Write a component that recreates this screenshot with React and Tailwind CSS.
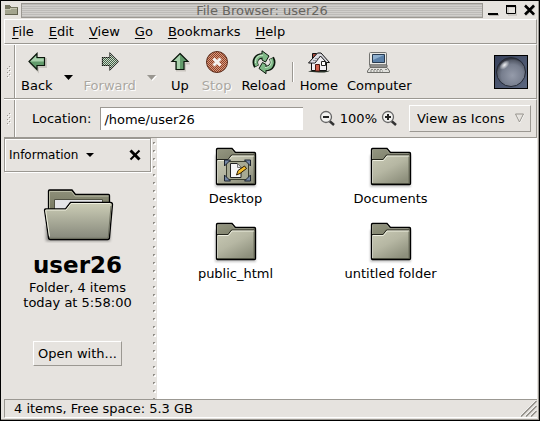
import React from 'react';

function SmallFolder() {
  return (
    <svg className="ml-px" width="13" height="12" viewBox="0 0 13 12" shapeRendering="crispEdges" aria-hidden="true">
      <path d="M0 11V1h5l1 2h7v8z" fill="#a3a48e" />
      <path d="M0 1h5v1h1v1h7v1H5v1H0z" fill="#74745f" />
      <path d="M0 5h5V4h7v1H6v1H0z" fill="#c5c5b0" />
      <path d="M12 4h1v7H0v-1h12z" fill="#62624f" />
    </svg>
  );
}

function Folder({ desktop }) {
  return (
    <svg width="48" height="42" viewBox="0 0 48 42" aria-hidden="true">
      <defs>
        <linearGradient id="front" x1="0" y1="0" x2="0.7" y2="1">
          <stop offset="0" stopColor="#c9cab5" />
          <stop offset="0.5" stopColor="#b6b7a3" />
          <stop offset="1" stopColor="#8d8f7c" />
        </linearGradient>
        <linearGradient id="tab" x1="0" y1="0" x2="0.5" y2="1">
          <stop offset="0" stopColor="#969882" />
          <stop offset="1" stopColor="#5f614f" />
        </linearGradient>
        <filter id="soft"><feGaussianBlur stdDeviation="1" /></filter>
      </defs>
      <rect x="3" y="8" width="41" height="32" fill="#000" opacity="0.22" filter="url(#soft)" />
      <path d="M4.500 37V2.500q0-1 1-1h14.500l3.500 4h19q1 0 1 1V36.500q0 1-1 1h-37q-1 0-1-1z" fill="url(#tab)" />
      <path d="M5.500 12V3q0-.5.5-.5h13.500l3.500 4h18.500" fill="none" stroke="#babba7" />
      <path d="M5 37V13.500h11l4-5h22.500V37z" fill="url(#front)" />
      <path d="M5 12.500h11l3.500-4.500h23" fill="none" stroke="#24251c" />
      <path d="M5.500 36V13.500h11l3.500-4.500h22" fill="none" stroke="#eeefe0" />
      <path d="M5 36.500h37v-27" fill="none" stroke="#6a6c5a" />
      <path d="M4.500 36V2.500q0-1 1-1h14.500l3.500 4h19q1 0 1 1V36.500q0 1-1 1h-37q-1 0-1-1z" fill="none" stroke="#000" strokeWidth="1.300" />
      {desktop && (
        <g>
          <path d="M14.500 14.500h22v18h-22z" fill="#a7a993" stroke="#3c3e30" />
          <path d="M12.500 13h6l-6 6zM38.500 13h-6l6 6zM12.500 34h6l-6-6zM38.500 34h-6l6-6z" fill="#7385a3" stroke="#1d2430" />
          <path d="M18.500 16.500h7l3.500 4v10H18.500z" fill="#f6f6f6" stroke="#222" />
          <path d="M25.500 16.500v4H29" fill="#ddd" stroke="#777" />
          <path d="M24.500 28l1.500-4.500 6.500-4.500 2 2.500-6.500 5z" fill="#f4bd2e" stroke="#2b1b00" />
        </g>
      )}
    </svg>
  );
}

function OpenFolder() {
  return (
    <svg width="76" height="62" viewBox="0 0 76 62" aria-hidden="true">
      <defs>
        <linearGradient id="openFront" x1="0" y1="0" x2="0" y2="1">
          <stop offset="0" stopColor="#cdceb7" />
          <stop offset="1" stopColor="#85877a" />
        </linearGradient>
        <linearGradient id="openBack" x1="0" y1="0" x2="0" y2="1">
          <stop offset="0" stopColor="#8e907a" />
          <stop offset="1" stopColor="#66684f" />
        </linearGradient>
        <filter id="openSoft"><feGaussianBlur stdDeviation="1.800" /></filter>
      </defs>
      <rect x="6" y="40" width="64" height="16" fill="#000" opacity="0.400" filter="url(#openSoft)" />
      <path d="M8.500 40V6q0-1 1-1h22.500l3.500 4.500h33q1 0 1 1V40z" fill="url(#openBack)" stroke="#000" strokeWidth="1.300" />
      <path d="M9.500 30V6.500h22l3.500 4.500h33.500" fill="none" stroke="#b9bba5" />
      <path d="M14.500 30V14.500h48v10" fill="#e4e5e8" stroke="#515244" />
      <path d="M4.500 25q0-1 1-1h20l5-6.500h40q2 0 2 2l-3 33q0 2-2 2H10.500q-2 0-2-2z" fill="url(#openFront)" stroke="#000" strokeWidth="1.300" />
      <path d="M9.500 51.500L5.700 25.500q0-.5.5-.5H26l5-6.500h39.500" fill="none" stroke="#eff0df" />
      <path d="M10 53.300h57q1 0 1.300-1.300l2.700-31" fill="none" stroke="#6a6c5c" />
    </svg>
  );
}

function Back() {
  return (
    <svg width="24" height="24" viewBox="0 0 24 24" aria-hidden="true">
      <path d="M5 13l8 8v-4h8V8" fill="none" stroke="#c9c5bf" strokeWidth="2" />
      <path d="M12 3.500v4h7.500v8H12v4L4 11.500z" fill="#629b6b" />
      <path d="M11.500 5v3.500H19v3H5z" fill="#a9d2ad" />
      <path d="M12 3.500v4h7.500v8H12v4L4 11.500z" fill="none" stroke="#0b160c" strokeWidth="1.200" />
    </svg>
  );
}

function Forward() {
  return (
    <svg width="24" height="24" viewBox="0 0 24 24" aria-hidden="true">
      <defs>
        <pattern id="arrowDither" width="2" height="2" patternUnits="userSpaceOnUse">
          <path d="M0 0h1v1H0zM1 1h1v1H1z" fill="#d5d6ce" shapeRendering="crispEdges" />
        </pattern>
      </defs>
      <path d="M12 3.500v4H4.500v8H12v4l8-8z" fill="#3f6947" stroke="#101510" strokeWidth="1.200" />
      <path d="M12 3.500v4H4.500v8H12v4l8-8z" fill="url(#arrowDither)" />
    </svg>
  );
}

function Up() {
  return (
    <svg width="24" height="24" viewBox="0 0 24 24" aria-hidden="true">
      <path d="M8 20.500h9v-7h5" fill="none" stroke="#c9c5bf" strokeWidth="2" />
      <path d="M12 3.500l8 8h-4v8H8v-8H4z" fill="#629b6b" />
      <path d="M12 4.500L5.500 11H9v8h3z" fill="#a9d2ad" />
      <path d="M12 3.500l8 8h-4v8H8v-8H4z" fill="none" stroke="#0b160c" strokeWidth="1.200" />
    </svg>
  );
}

function Stop() {
  return (
    <svg width="24" height="24" viewBox="0 0 24 24" aria-hidden="true">
      <defs>
        <pattern id="stopDither" width="2" height="2" patternUnits="userSpaceOnUse">
          <path d="M0 0h1v1H0zM1 1h1v1H1z" fill="#d99a80" shapeRendering="crispEdges" />
        </pattern>
      </defs>
      <circle cx="12" cy="12" r="10.500" fill="#8c4227" stroke="#5c3020" />
      <circle cx="12" cy="12" r="10" fill="url(#stopDither)" />
      <path d="M8.500 8.500l7 7M15.500 8.500l-7 7" fill="none" stroke="#f4f1ee" strokeWidth="3" />
    </svg>
  );
}

function Reload() {
  return (
    <svg width="24" height="24" viewBox="0 0 24 24" aria-hidden="true">
      <path d="M4.500 16.500C1.500 11 4.500 5.500 11 6M19.500 8C22.500 13.500 19.500 19 13 18.500" fill="none" stroke="#0b160c" strokeWidth="5.500" />
      <path d="M10 .800l7 5.200-3.500 6-3.500-2zM14 23.700l-7-5.200 3.500-6 3.500 2z" fill="#7fb987" stroke="#0b160c" strokeLinejoin="round" />
      <path d="M4.800 15.800C2.300 11 5 5.500 11.500 6M19.200 8.700C21.700 13.500 19 19 12.500 18.500" fill="none" stroke="#7fb987" strokeWidth="3.300" />
      <path d="M3.500 13C3 8.500 5.500 5 11 5.200M18.500 9.500c2 4-.5 8-5.500 8" fill="none" stroke="#cdeacf" />
    </svg>
  );
}

function Home() {
  return (
    <svg width="24" height="24" viewBox="0 0 24 24" aria-hidden="true">
      <path d="M1 21.500q5-2 11-1t11 0q-3 2.500-11 2t-11-1z" fill="#263026" />
      <path d="M4.500 12v8.500h15V12L14 5z" fill="#f0eff2" stroke="#111" />
      <path d="M5.500 3.500h4v5h-4z" fill="#a4483a" stroke="#111" />
      <path d="M1.500 13L10.500 3h3.500l8.500 9.500h-3L13.500 6 8 13z" fill="#dcdce2" stroke="#111" />
      <path d="M4 12.500h4M6 10.500h3.500M8 8.500h3.500" stroke="#92929a" />
      <path d="M8.500 14.500h4v6.500h-4z" fill="#d0604e" stroke="#4c1912" />
      <path d="M14.500 11.500h4v4h-4z" fill="#fff" stroke="#222" />
    </svg>
  );
}

function Computer() {
  return (
    <svg width="24" height="24" viewBox="0 0 24 24" aria-hidden="true">
      <path d="M3.500 2.500h15q1 0 1 1V15h-17V3.500q0-1 1-1z" fill="#e9e9e5" stroke="#737370" />
      <path d="M5.500 4.500h12v8h-12z" fill="#5a80a8" stroke="#273a50" />
      <path d="M6 5h11L6 10z" fill="#8fb0cf" />
      <path d="M3 15h17v2H3z" fill="#bababa" stroke="#62625e" />
      <path d="M3 17.500h17l2.500 3.500v1.500H.500V21z" fill="#e2e2de" stroke="#6e6e6a" />
      <path d="M4 19.500h12M3 21h13M18 19.500h2" stroke="#868682" strokeDasharray="2 1" />
    </svg>
  );
}

function Throbber() {
  return (
    <svg width="34" height="34" viewBox="0 0 34 34" aria-hidden="true">
      <defs>
        <linearGradient id="sky" x1="0" y1="0" x2="1" y2="1">
          <stop offset="0" stopColor="#36405a" /><stop offset="1" stopColor="#5d6880" />
        </linearGradient>
        <radialGradient id="ball" cx="0.550" cy="0.620" r="0.580">
          <stop offset="0" stopColor="#959baa" /><stop offset="0.650" stopColor="#777e8e" /><stop offset="0.900" stopColor="#555b69" /><stop offset="1" stopColor="#30333d" />
        </radialGradient>
        <radialGradient id="glint"><stop offset="0" stopColor="#f2f3f6" /><stop offset="1" stopColor="#f2f3f6" stopOpacity="0" /></radialGradient>
      </defs>
      <rect x="0.500" y="0.500" width="33" height="33" fill="url(#sky)" stroke="#000" />
      <circle cx="17" cy="17" r="14.500" fill="url(#ball)" stroke="#252a36" />
      <ellipse cx="10.500" cy="10" rx="6" ry="3.500" fill="url(#glint)" transform="rotate(-42 10.500 10)" />
    </svg>
  );
}

function Magnifier({ plus }) {
  return (
    <svg width="17" height="17" viewBox="0 0 17 17" aria-hidden="true">
      <path d="M10.500 11l4.500 4" stroke="#333" strokeWidth="2.500" />
      <circle cx="7" cy="7" r="5.500" fill="#f2f2f0" stroke="#666" strokeWidth="1.300" />
      <path d="M4 7h6" stroke="#222" strokeWidth="2" />
      {plus && <path d="M7 4v6" stroke="#222" strokeWidth="2" />}
    </svg>
  );
}

function Triangle({ faded }) {
  return (
    <svg width="10" height="6" viewBox="0 0 10 6" aria-hidden="true">
      {faded && <path d="M1 1h9L5.500 6z" fill="#fff" />}
      <path d="M0 0h9L4.500 5z" fill={faded ? '#999690' : '#000'} />
    </svg>
  );
}

function Handle() {
  return (
    <div className="flex w-[11px] shrink-0 items-center justify-center self-stretch border-r border-[#9b9892] shadow-[1px_0_0_#fff]">
      <svg width="4" height="12" viewBox="0 0 4 12" shapeRendering="crispEdges" aria-hidden="true">
        <path d="M0 2h1v1H0zM0 6h1v1H0zM0 10h1v1H0zM2 0h1v1H2zM2 4h1v1H2zM2 8h1v1H2z" fill="#98958f" />
        <path d="M1 3h1v1H1zM1 7h1v1H1zM1 11h1v1H1zM3 1h1v1H3zM3 5h1v1H3zM3 9h1v1H3z" fill="#fff" />
      </svg>
    </div>
  );
}

function Tool({ label, disabled, children }) {
  return (
    <button disabled={disabled} className="flex flex-col items-center gap-1 whitespace-nowrap leading-4 disabled:text-[#aaa7a1] disabled:[text-shadow:1px_1px_0_#fff]">
      {children}
      {label}
    </button>
  );
}

const menus = ['File', 'Edit', 'View', 'Go', 'Bookmarks', 'Help'];
const files = ['Desktop', 'Documents', 'public_html', 'untitled folder'];

export default function App() {
  return (
    <div className="flex min-h-screen flex-col border border-black bg-[#e6e3df] font-['DejaVu_Sans',sans-serif] text-[13px] leading-4 text-black">
      <div className="flex flex-1 flex-col border-b border-r border-[#9b9892] pb-px pl-[3px] pr-px">
        <header className="flex h-[18px] items-center gap-[3px] pr-0.5">
          <SmallFolder />
          <h1 className="h-[15px] flex-1 border border-[#9b9892] bg-[repeating-linear-gradient(#bdbbb8_0_1px,#d1cfcc_1px_2px)] pl-5 text-center leading-[14px] text-[#66645f]">
            File Browser: user26
          </h1>
          <div className="flex items-center gap-[7px] pl-0.5">
            <button aria-label="Minimize">
              <svg className="block" width="11" height="12" viewBox="0 0 11 12"><path d="M1 11h10" stroke="#b9b6b1" strokeWidth="2" /><path d="M0 10h10" stroke="#000" strokeWidth="2" /></svg>
            </button>
            <button aria-label="Maximize">
              <svg className="block" width="11" height="12" viewBox="0 0 11 12"><path d="M2 3h9v8H2z" fill="none" stroke="#b9b6b1" /><path d="M.500 1.500h9v8h-9z" fill="none" stroke="#000" /><path d="M0 2h10" stroke="#000" strokeWidth="2" /></svg>
            </button>
            <button aria-label="Close">
              <svg className="block" width="11" height="12" viewBox="0 0 11 12"><path d="M2 2l9 9M11 2l-9 9" stroke="#b9b6b1" strokeWidth="2" /><path d="M1 1.500l9 9M10 1.500l-9 9" stroke="#000" strokeWidth="2.500" /></svg>
            </button>
          </div>
        </header>

        <div className="flex flex-1 flex-col">
          <nav className="flex h-[25px] items-center gap-[15px] border-b border-l border-r border-t border-b-[#9b9892] border-l-white border-r-[#9b9892] border-t-white pl-[7px]">
            {menus.map((m) => (
              <button key={m}>
                <span className="underline decoration-1 underline-offset-2">{m[0]}</span>{m.slice(1)}
              </button>
            ))}
          </nav>

          <div className="flex h-[55px] items-center border-b border-r border-t border-[#9b9892] border-t-white">
            <Handle />
            <div className="flex flex-1 items-center pl-[6px] pr-2">
              <Tool label="Back"><Back /></Tool>
              <button aria-label="Back history" className="ml-[11px] mt-3"><Triangle /></button>
              <div className="ml-[10px]"><Tool label="Forward" disabled><Forward /></Tool></div>
              <button aria-label="Forward history" disabled className="ml-[11px] mt-3"><Triangle faded /></button>
              <div className="ml-[11px] flex gap-[10px]">
                <Tool label="Up"><Up /></Tool>
                <Tool label="Stop" disabled><Stop /></Tool>
                <Tool label="Reload"><Reload /></Tool>
              </div>
              <div className="ml-[6px] h-5 w-0.5 border-l border-r border-[#9b9892] border-r-white" />
              <div className="ml-[6px] flex gap-[9px]">
                <Tool label="Home"><Home /></Tool>
                <Tool label="Computer"><Computer /></Tool>
              </div>
              <div className="ml-auto"><Throbber /></div>
            </div>
          </div>

          <div className="flex h-[39px] items-center border-b border-r border-t border-[#9b9892] border-t-white">
            <Handle />
            <div className="flex flex-1 items-center pl-[17px] pr-[5px]">
              <label htmlFor="location">Location:</label>
              <input id="location" defaultValue="/home/user26" className="ml-[9px] h-[23px] min-w-0 flex-1 border-l border-t border-[#9b9892] bg-white px-[3px] outline-none" />
              <div className="ml-4 flex items-center gap-1">
                <button aria-label="Zoom out"><Magnifier /></button>
                <span>100%</span>
                <button aria-label="Zoom in"><Magnifier plus /></button>
              </div>
              <div className="relative ml-[11px]">
                <select aria-label="View" className="h-[27px] w-[122px] appearance-none border border-white border-b-[#9b9892] border-r-[#9b9892] bg-[#e6e3df] pl-[7px] outline-none">
                  <option>View as Icons</option>
                </select>
                <svg className="pointer-events-none absolute right-[6px] top-[8px]" width="10" height="11" viewBox="0 0 10 11" aria-hidden="true">
                  <path d="M1.500 2L5 9.500l4-8" fill="none" stroke="#fff" />
                  <path d="M.500 1h8L4.500 9z" fill="none" stroke="#96938d" />
                </svg>
              </div>
            </div>
          </div>

          <div className="flex flex-1">
            <aside className="flex w-[147px] shrink-0 flex-col">
              <div className="flex h-[34px] items-center justify-between border border-[#9b9892] pl-1 pr-[9px] shadow-[inset_1px_1px_0_#fff,1px_1px_0_#fff]">
                <button className="flex items-center gap-[8px] text-xs">Information
                  <svg width="8" height="4" viewBox="0 0 8 4" aria-hidden="true"><path d="M0 0h8L4 4z" /></svg>
                </button>
                <button aria-label="Close side pane">
                  <svg width="12" height="12" viewBox="0 0 12 12"><path d="M1.500 1.500l9 9" stroke="#000" strokeWidth="3" /><path d="M10.500 1.500l-9 9" stroke="#000" strokeWidth="2" /></svg>
                </button>
              </div>
              <div className="flex flex-col items-center pt-[13px] text-center leading-[15px]">
                <OpenFolder />
                <h2 className="mt-[3px] text-[23px] font-bold leading-[30px]">user26</h2>
                <p>Folder, 4 items<br />today at 5:58:00</p>
                <button className="mt-[31px] h-[25px] border border-white border-b-[#9b9892] border-r-[#9b9892] px-1">Open with...</button>
              </div>
            </aside>
            <div className="w-[6px] shrink-0">
              <svg className="block" width="6" height="100%" shapeRendering="crispEdges" aria-hidden="true">
                <defs>
                  <pattern id="dots" width="6" height="8" patternUnits="userSpaceOnUse">
                    <path d="M2 4h2v1H3v1H2z" fill="#918e88" /><path d="M4 5h1v2H3V6h1z" fill="#fff" />
                  </pattern>
                </defs>
                <rect width="6" height="100%" fill="url(#dots)" />
              </svg>
            </div>
            <main className="flex-1 bg-white pl-px pt-[9px]">
              <ul className="grid grid-cols-[repeat(auto-fill,155px)] gap-y-[15px]">
                {files.map((f) => (
                  <li key={f} className="flex flex-col items-center gap-0.5">
                    <Folder desktop={f === 'Desktop'} />
                    <span>{f}</span>
                  </li>
                ))}
              </ul>
            </main>
          </div>

          <footer className="flex h-[19px] items-center justify-between border-b border-l border-t border-[#9b9892] border-b-white pl-[9px]">
            <span>4 items, Free space: 5.3 GB</span>
            <svg className="self-end" width="17" height="17" viewBox="0 0 17 17" aria-hidden="true">
              <path d="M0 16L16 0M5 16L16 5M10 16L16 10" stroke="#fff" />
              <path d="M1 16.500L16.500 1M6 16.500L16.500 6M11 16.500L16.500 11" stroke="#8f8c86" strokeWidth="1.500" />
            </svg>
          </footer>
        </div>
      </div>
    </div>
  );
}
